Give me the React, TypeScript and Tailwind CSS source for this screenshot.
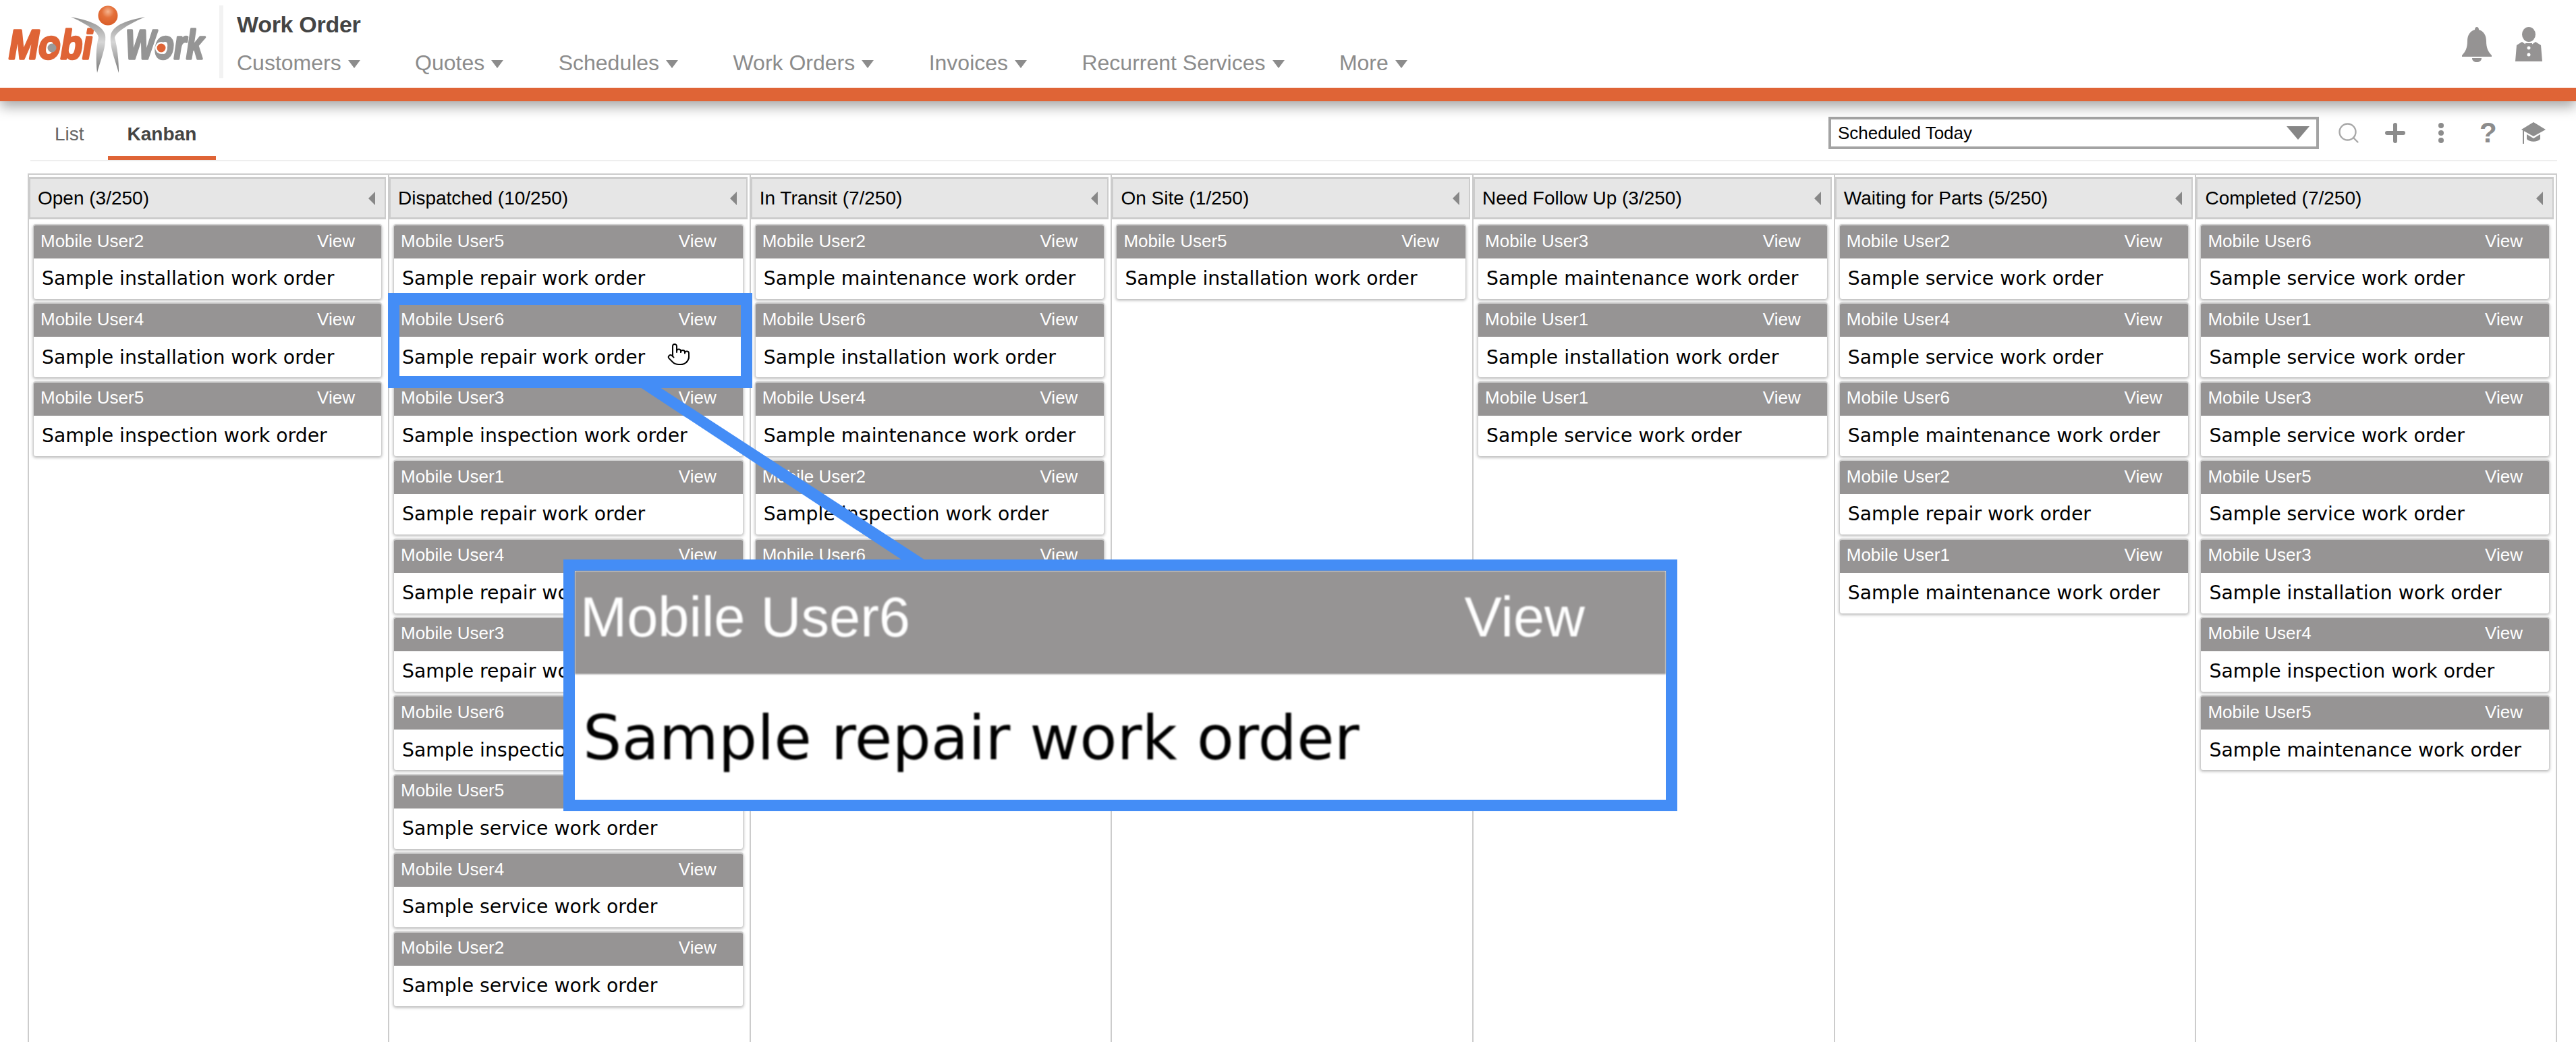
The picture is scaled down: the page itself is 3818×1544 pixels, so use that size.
import { Pointer, Search } from 'lucide-react'

const navItems = ['Customers', 'Quotes', 'Schedules', 'Work Orders', 'Invoices', 'Recurrent Services', 'More']

const columns = [
  {
    title: 'Open (3/250)',
    cards: [
      ['2', 'installation'],
      ['4', 'installation'],
      ['5', 'inspection'],
    ],
  },
  {
    title: 'Dispatched (10/250)',
    cards: [
      ['5', 'repair'],
      ['6', 'repair'],
      ['3', 'inspection'],
      ['1', 'repair'],
      ['4', 'repair'],
      ['3', 'repair'],
      ['6', 'inspection'],
      ['5', 'service'],
      ['4', 'service'],
      ['2', 'service'],
    ],
  },
  {
    title: 'In Transit (7/250)',
    cards: [
      ['2', 'maintenance'],
      ['6', 'installation'],
      ['4', 'maintenance'],
      ['2', 'inspection'],
      ['6', 'service'],
    ],
  },
  {
    title: 'On Site (1/250)',
    cards: [['5', 'installation']],
  },
  {
    title: 'Need Follow Up (3/250)',
    cards: [
      ['3', 'maintenance'],
      ['1', 'installation'],
      ['1', 'service'],
    ],
  },
  {
    title: 'Waiting for Parts (5/250)',
    cards: [
      ['2', 'service'],
      ['4', 'service'],
      ['6', 'maintenance'],
      ['2', 'repair'],
      ['1', 'maintenance'],
    ],
  },
  {
    title: 'Completed (7/250)',
    cards: [
      ['6', 'service'],
      ['1', 'service'],
      ['3', 'service'],
      ['5', 'service'],
      ['3', 'installation'],
      ['4', 'inspection'],
      ['5', 'maintenance'],
    ],
  },
]

function Logo() {
  return (
    <svg width="310" height="112" viewBox="0 0 310 112" className="shrink-0">
      <defs>
        <radialGradient id="ball" cx="50%" cy="30%" r="70%">
          <stop offset="0%" stopColor="#f6b48f" />
          <stop offset="45%" stopColor="#e4703a" />
          <stop offset="100%" stopColor="#d95d28" />
        </radialGradient>
        <linearGradient id="swoosh" x1="0" y1="0" x2="0" y2="1">
          <stop offset="0%" stopColor="#8f8f8f" />
          <stop offset="45%" stopColor="#d6d6d6" />
          <stop offset="100%" stopColor="#777777" />
        </linearGradient>
      </defs>
      <text x="13" y="87" fontFamily="'Liberation Sans', sans-serif" fontWeight="700" fontStyle="italic" fontSize="62" textLength="124" lengthAdjust="spacingAndGlyphs" fill="#df6436" stroke="#df6436" strokeWidth="3.5" strokeLinejoin="round">Mobi</text>
      <circle cx="77" cy="71" r="6.5" fill="#9a9a9a" />
      <text x="186" y="87" fontFamily="'Liberation Sans', sans-serif" fontWeight="700" fontStyle="italic" fontSize="62" textLength="116" lengthAdjust="spacingAndGlyphs" fill="#959595" stroke="#959595" strokeWidth="3.5" strokeLinejoin="round">Work</text>
      <circle cx="239" cy="71" r="9" fill="#ffffff" />
      <circle cx="239" cy="71" r="6.5" fill="#df6436" />
      <path d="M105 25 C130 30 152 36 156 52 C158 70 148 92 144 108 C142 90 142 70 146 56 C146 46 125 34 105 25 Z" fill="url(#swoosh)" />
      <path d="M215 25 C190 30 168 36 164 52 C162 70 172 92 176 108 C176 90 174 70 170 56 C172 46 195 34 215 25 Z" fill="url(#swoosh)" />
      <circle cx="160" cy="23" r="14.5" fill="url(#ball)" />
    </svg>
  )
}

function BellIcon() {
  return (
    <svg width="46" height="52" viewBox="0 0 46 52" fill="#959393">
      <path d="M23 0 C25 0 26 2 26 4 C33 6 37 12 37 21 C37 31 40 37 45 42 L45 44 L1 44 L1 42 C6 37 9 31 9 21 C9 12 13 6 20 4 C20 2 21 0 23 0 Z" />
      <path d="M16 46 L30 46 C30 50 27 52 23 52 C19 52 16 50 16 46 Z" />
    </svg>
  )
}

function PersonIcon() {
  return (
    <svg width="40" height="51" viewBox="0 0 40 51" fill="#959393">
      <ellipse cx="20" cy="11" rx="10" ry="11" />
      <path d="M10 22 L17 27 L17 51 L0 51 L2 27 Z" />
      <path d="M30 22 L23 27 L23 51 L40 51 L38 27 Z" />
      <rect x="15" y="24" width="10" height="27" />
      <circle cx="20" cy="31" r="2.5" fill="#ffffff" />
      <circle cx="20" cy="41" r="2.5" fill="#ffffff" />
    </svg>
  )
}

function CapIcon() {
  return (
    <svg width="36" height="32" viewBox="0 0 36 32" fill="#8e8e8e">
      <path d="M18 0 L36 11 L18 21 L0 11 Z" />
      <path d="M8 18 L18 24 L28 18 L28 25 C24 30 12 30 8 25 Z" />
      <rect x="2" y="12" width="2" height="20" />
    </svg>
  )
}

function Card({ user, kind }: { user: string; kind: string }) {
  return (
    <div className="h-[111px] mb-[5.4px] rounded-[4px] bg-white border-t-[2px] border-x border-[#cfcfcf] shadow-[0_2px_4px_rgba(0,0,0,0.3)] overflow-hidden">
      <div className="flex items-center justify-between h-[49px] pb-[3px] pl-[10px] pr-[39px] bg-[#969494] text-white text-[26px] font-['Liberation_Sans',sans-serif]">
        <span>Mobile User{user}</span>
        <span>View</span>
      </div>
      <div className="flex items-center h-[58px] pt-[3px] pl-[12px] text-black text-[28.3px] font-['DejaVu_Sans',sans-serif] whitespace-nowrap">
        Sample {kind} work order
      </div>
    </div>
  )
}

export default function App() {
  return (
    <div className="relative flex flex-col w-[3818px] h-[1544px] overflow-hidden bg-white font-['Liberation_Sans',sans-serif]">
      <div className="relative z-10 shrink-0 shadow-[0_8px_18px_rgba(0,0,0,0.35)]">
        <div className="flex h-[130px] bg-white">
          <div className="w-[325px]">
            <Logo />
          </div>
          <div className="w-[6px] h-[108px] mt-[8px] bg-[#f2f2f2]" />
          <div className="ml-[20px]">
            <div className="h-[40px] mt-[16px] text-[34px] leading-[40px] font-bold text-[#444444] tracking-[-0.3px]">Work Order</div>
            <div className="flex gap-[81.4px] h-[40px] mt-[17px] text-[32px] leading-[40px] text-[#8c8c8c]">
              {navItems.map((item) => (
                <div key={item} className="flex items-center gap-[10px]">
                  <span>{item}</span>
                  <span className="w-0 h-0 mt-[3px] border-x-[9px] border-x-transparent border-t-[12px] border-t-[#8c8c8c]" />
                </div>
              ))}
            </div>
          </div>
          <div className="flex items-start gap-[34px] ml-auto mr-[50px] mt-[40px]">
            <BellIcon />
            <PersonIcon />
          </div>
        </div>
        <div className="h-[20px] bg-[#df6436]" />
      </div>

      <div className="flex items-end h-[89px] shrink-0 ml-[45px] mr-[28px] border-b-2 border-[#eeeeee]">
        <div className="flex items-center h-[71px] ml-[36px] border-b-[6px] border-transparent text-[28px] text-[#666666]">List</div>
        <div className="flex items-center h-[71px] ml-[35px] px-[29px] border-b-[6px] border-[#df6436] text-[28px] font-bold text-[#444444]">Kanban</div>
        <div className="flex items-center self-center ml-auto mt-[7px] pr-[17px]">
          <div className="flex items-center justify-between w-[727px] h-[48px] pl-[10px] pr-[10px] border-[4px] border-[#a3a3a3] text-[26px] text-black">
            <span>Scheduled Today</span>
            <span className="w-0 h-0 border-x-[17px] border-x-transparent border-t-[20px] border-t-[#868686]" />
          </div>
          <Search size={36} strokeWidth={1.6} className="ml-[26px] text-[#a8a8a8]" />
          <svg width="30" height="30" viewBox="0 0 30 30" className="ml-[36px]">
            <path d="M15 3 V27 M3 15 H27" stroke="#8c8c8c" strokeWidth="6" strokeLinecap="round" />
          </svg>
          <svg width="14" height="30" viewBox="0 0 14 30" className="ml-[46px]" fill="#8c8c8c">
            <circle cx="7" cy="4" r="4" />
            <circle cx="7" cy="15" r="4" />
            <circle cx="7" cy="26" r="4" />
          </svg>
          <span className="ml-[50px] w-[22px] text-[42px] leading-[42px] font-bold text-[#8c8c8c]">?</span>
          <div className="ml-[40px]">
            <CapIcon />
          </div>
        </div>
      </div>

      <div className="grid grid-cols-[534px_repeat(5,535.7px)_1fr] flex-1 mt-[18px] ml-[41px] mr-[28px] border-t-[2px] border-x-[2px] border-[#cccccc]">
        {columns.map((col) => (
          <div key={col.title} className="flex flex-col border-r-[2px] border-[#cccccc] last:border-r-0 min-w-0">
            <div className="flex items-center justify-between h-[63px] mt-[3px] mr-[3px] pl-[11px] pr-[14px] bg-[#e6e6e6] border-y-[3px] border-x-[2px] border-[#cccccc] text-[28px] text-black">
              <span>{col.title}</span>
              <svg width="10" height="20" viewBox="0 0 10 20" fill="#888888">
                <path d="M10 0 L10 20 L0 10 Z" />
              </svg>
            </div>
            <div className="mt-[7px] ml-[6px] mr-[9px]">
              {col.cards.map((card, i) => (
                <Card key={i} user={card[0]} kind={card[1]} />
              ))}
            </div>
          </div>
        ))}
      </div>

      {/* highlight and zoom callout */}
      <svg width="3818" height="1544" className="absolute top-0 left-0 z-20 pointer-events-none">
        <polygon points="943,570 972,570 1379,835 1345,835" fill="#448df6" />
      </svg>
      <div className="absolute z-20 left-[575px] top-[434px] w-[540px] h-[141px] border-y-[18px] border-x-[17px] border-[#448df6]" />
      <Pointer size={36} strokeWidth={1.3} className="absolute z-20 left-[988px] top-[507px] text-black fill-white" />
      <div className="absolute z-30 left-[835px] top-[829px] w-[1651px] h-[373px] border-[17px] border-[#448df6] bg-white">
        <div className="flex items-center justify-between h-[153px] pb-[14px] pl-[8px] pr-[120px] bg-[#969494] text-white text-[83px] blur-[1px]">
          <span>Mobile User6</span>
          <span>View</span>
        </div>
        <div className="flex items-center h-[186px] pt-[4px] pl-[12px] text-black text-[90.4px] font-['DejaVu_Sans',sans-serif] whitespace-nowrap blur-[1px]">
          Sample repair work order
        </div>
      </div>
    </div>
  )
}
